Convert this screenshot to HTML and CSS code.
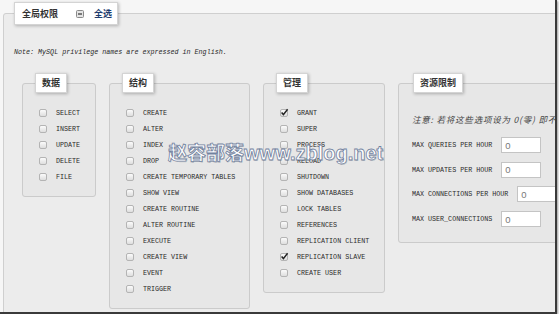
FILE: index.html
```html
<!DOCTYPE html>
<html lang="zh-CN">
<head>
<meta charset="UTF-8">
<title>全局权限</title>
<link rel="stylesheet" href="styles.css">
</head>
<body>

<div class="frame">
  <fieldset class="global">
    <legend class="tag tag-main">全局权限<span class="collapse"><svg width="8" height="8" viewBox="0 0 8 8"><rect x="0.5" y="0.5" width="7" height="7" rx="1" fill="#e4e4e4" stroke="#8a8a8a"/><path d="M2 4h4" stroke="#333" stroke-width="1.2"/></svg></span><a class="check-all">全选</a></legend>

    <p class="note">Note: MySQL privilege names are expressed in English.</p>

    <div class="groups">
      <fieldset class="group group-data">
        <legend class="tag">数据</legend>
        <div class="item"><span class="box"></span>SELECT</div>
        <div class="item"><span class="box"></span>INSERT</div>
        <div class="item"><span class="box"></span>UPDATE</div>
        <div class="item"><span class="box"></span>DELETE</div>
        <div class="item"><span class="box"></span>FILE</div>
      </fieldset>

      <fieldset class="group group-struct">
        <legend class="tag">结构</legend>
        <div class="item"><span class="box"></span>CREATE</div>
        <div class="item"><span class="box"></span>ALTER</div>
        <div class="item"><span class="box"></span>INDEX</div>
        <div class="item"><span class="box"></span>DROP</div>
        <div class="item"><span class="box"></span>CREATE TEMPORARY TABLES</div>
        <div class="item"><span class="box"></span>SHOW VIEW</div>
        <div class="item"><span class="box"></span>CREATE ROUTINE</div>
        <div class="item"><span class="box"></span>ALTER ROUTINE</div>
        <div class="item"><span class="box"></span>EXECUTE</div>
        <div class="item"><span class="box"></span>CREATE VIEW</div>
        <div class="item"><span class="box"></span>EVENT</div>
        <div class="item"><span class="box"></span>TRIGGER</div>
      </fieldset>

      <fieldset class="group group-admin">
        <legend class="tag">管理</legend>
        <div class="item"><span class="box"><svg width="9" height="9" viewBox="0 0 9 9"><path d="M1.6 4.6 3.4 6.6 7.6 1.2" fill="none" stroke="#222" stroke-width="1.5"/></svg></span>GRANT</div>
        <div class="item"><span class="box"></span>SUPER</div>
        <div class="item"><span class="box"></span>PROCESS</div>
        <div class="item"><span class="box"></span>RELOAD</div>
        <div class="item"><span class="box"></span>SHUTDOWN</div>
        <div class="item"><span class="box"></span>SHOW DATABASES</div>
        <div class="item"><span class="box"></span>LOCK TABLES</div>
        <div class="item"><span class="box"></span>REFERENCES</div>
        <div class="item"><span class="box"></span>REPLICATION CLIENT</div>
        <div class="item"><span class="box"><svg width="9" height="9" viewBox="0 0 9 9"><path d="M1.6 4.6 3.4 6.6 7.6 1.2" fill="none" stroke="#222" stroke-width="1.5"/></svg></span>REPLICATION SLAVE</div>
        <div class="item"><span class="box"></span>CREATE USER</div>
      </fieldset>

      <fieldset class="group group-limit">
        <legend class="tag">资源限制</legend>
        <p class="limit-note">注意: 若将这些选项设为 0(零) 即不限制。</p>
        <div class="limit-row"><label>MAX QUERIES PER HOUR</label><input type="text" value="0"></div>
        <div class="limit-row"><label>MAX UPDATES PER HOUR</label><input type="text" value="0"></div>
        <div class="limit-row"><label>MAX CONNECTIONS PER HOUR</label><input type="text" value="0"></div>
        <div class="limit-row"><label>MAX USER_CONNECTIONS</label><input type="text" value="0"></div>
      </fieldset>
    </div>
  </fieldset>

  <div class="watermark"><span class="wm-cn">赵容部落</span><span class="wm-en">www.zblog.net</span></div>
</div>

</body>
</html>
```

FILE: styles.css
```css
body{margin: 0;
    background-color: #ffffff;}

.frame{position: relative;
    width: 557px;
    height: 314px;
    overflow: hidden;
    box-sizing: border-box;
    padding: 2px 0 0 3px;
    background-color: #f6f6f6;
    border-right: 2px solid #3a3a3a;
    border-bottom: 2px solid #3a3a3a;
    box-shadow: 1px 1px 2px rgba(0, 0, 0, 0.4);}

.global{margin: 0;
    width: 620px;
    min-height: 340px;
    box-sizing: border-box;
    padding: 0 10px;
    border: 1px solid #cfcfcf;
    border-radius: 3px;
    background-color: #ececec;}

.tag{padding: 3px 6px;
    font-family: "Noto Sans CJK SC", sans-serif;
    font-size: 9px;
    font-weight: bold;
    line-height: 12px;
    color: #333333;
    background-color: #ffffff;
    border: 1px solid #d4d4d4;
    box-shadow: 1px 1px 3px rgba(0, 0, 0, 0.25);}

.tag-main{display: flex;
    align-items: center;
    padding: 4px 5px 4px 7px;
    line-height: 13px;
    font-weight: 600;}

.collapse{display: flex;
    margin-left: 18px;}

.check-all{margin-left: 10px;
    color: #1e3c6e;
    cursor: pointer;}

.note{margin: 22px 0 0;
    font-family: "Liberation Mono", monospace;
    font-style: italic;
    font-size: 6.7px;
    line-height: 10px;
    color: #2a2a2a;}

.groups{display: flex;
    align-items: flex-start;
    gap: 13px;
    margin: 16px 0 0 8px;}

.group{margin: 0;
    flex-shrink: 0;
    min-width: 0;
    box-sizing: border-box;
    padding: 12px 6px 11px 12px;
    border: 1px solid #cbcbcb;
    border-radius: 3px;
    background-color: #e7e7e7;}

.group-data{width: 74px;}
.group-struct{width: 141px;}
.group-admin{width: 122px;}
.group-limit{width: 220px;
    padding: 21px 0 15px 13px;}

.group-limit .tag{margin-left: 1px;}

.item{display: flex;
    align-items: center;
    height: 16px;
    padding-left: 4px;
    font-family: "Liberation Mono", monospace;
    font-size: 6.7px;
    color: #2a2a2a;
    white-space: nowrap;}

.box{position: relative;
    width: 8px;
    height: 8px;
    margin-right: 9px;
    box-sizing: border-box;
    border: 1px solid #b4b4b4;
    border-radius: 2px;
    background: linear-gradient(#fbfbfb, #dedede);}

.box svg{position: absolute;
    left: -1px;
    top: -2px;}

.limit-note{margin: 0;
    font-family: "Noto Sans CJK SC", sans-serif;
    font-style: italic;
    font-size: 8.5px;
    letter-spacing: 0.8px;
    line-height: 10px;
    color: #444444;
    white-space: nowrap;}

.limit-row{display: flex;
    align-items: center;
    height: 16px;
    margin-top: 8.7px;
    font-family: "Liberation Mono", monospace;
    font-size: 6.7px;
    color: #2a2a2a;
    white-space: nowrap;}

.limit-note + .limit-row{margin-top: 13px;}

.limit-row label{margin-right: 9px;}

.limit-row input{width: 40px;
    height: 16px;
    box-sizing: border-box;
    margin: 0;
    padding: 0 3px;
    border: 1px solid #c4c4c4;
    background-color: #ffffff;
    font-family: "Liberation Sans", sans-serif;
    font-size: 9.5px;
    color: #777777;}

.watermark{position: absolute;
    left: 168px;
    top: 142px;
    display: flex;
    align-items: baseline;
    line-height: 1;
    color: #ffffff;
    -webkit-text-stroke: 0.8px #72829f;
    text-shadow: 1px 1px 0 rgba(0, 0, 0, 0.15);
    pointer-events: none;}

.wm-cn{font-family: "Noto Sans CJK SC", sans-serif;
    font-size: 19px;
    font-weight: bold;}

.wm-en{font-family: "Liberation Sans", sans-serif;
    font-size: 20px;
    font-weight: bold;}
```
